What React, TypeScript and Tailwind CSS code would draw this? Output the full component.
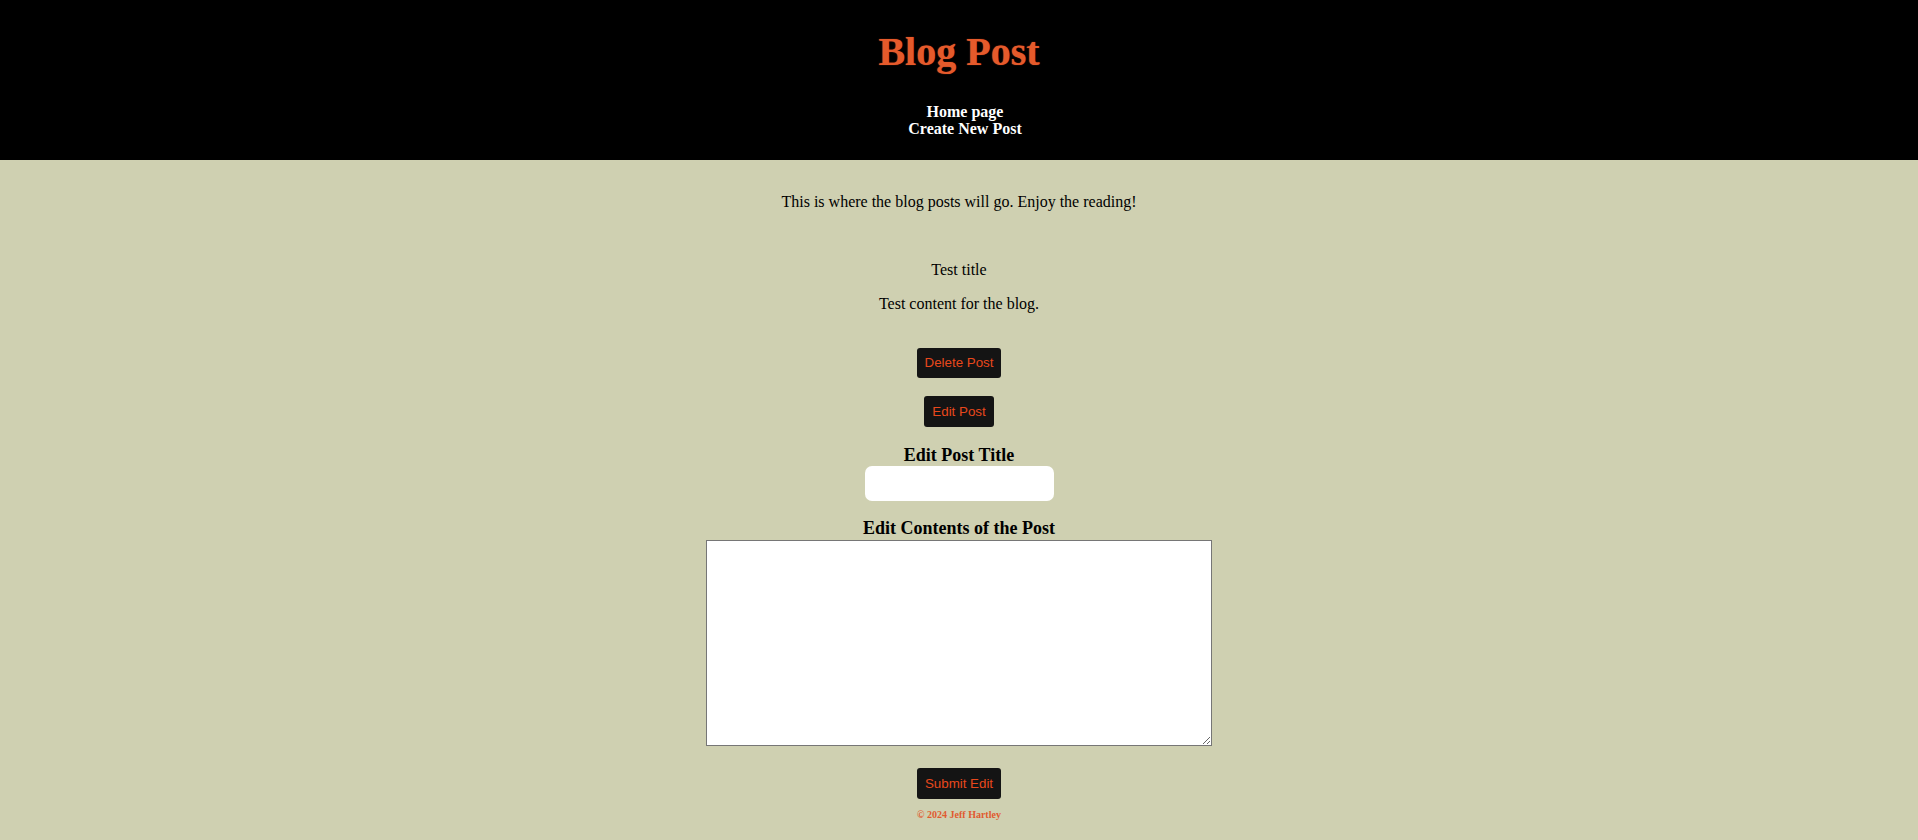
export default function App() {
  return (
    <div className="min-h-screen w-full bg-[#cfd0b1] font-['Liberation_Serif',serif] text-black">
      {/* Header */}
      <header className="flex h-[160px] flex-col items-center bg-black pt-[29px]">
        <h1 className="text-[40px] font-bold leading-[46px] text-[#e55a2b] [text-shadow:0_0_1px_#b8401c]">
          Blog Post
        </h1>
        <nav className="mt-[28px] flex flex-col items-center pl-[12px] text-[16px] font-bold leading-[17px] text-white">
          <a href="#">Home page</a>
          <a href="#">Create New Post</a>
        </nav>
      </header>

      {/* Content */}
      <main className="flex flex-col items-center text-[16px] leading-[18px]">
        <p className="mt-[33px]">This is where the blog posts will go. Enjoy the reading!</p>

        <p className="mt-[50px]">Test title</p>
        <p className="mt-[16px]">Test content for the blog.</p>

        <button className="mt-[35px] rounded-[3px] bg-[#141414] px-2 py-2 font-['Liberation_Sans',Arial,sans-serif] text-[13.33px] leading-[14px] text-[#e8481c]">
          Delete Post
        </button>
        <button className="mt-[18px] rounded-[3px] bg-[#141414] px-2 py-2 font-['Liberation_Sans',Arial,sans-serif] text-[13.33px] leading-[15px] text-[#e8481c]">
          Edit Post
        </button>

        <h3 className="mt-[17px] text-[18px] font-bold leading-[22px]">Edit Post Title</h3>
        <input type="text" className="h-[35px] w-[189px] rounded-[7px] bg-white px-2 outline-none" />

        <h3 className="mt-[16px] text-[18px] font-bold leading-[22px]">Edit Contents of the Post</h3>
        <textarea className="mt-[1px] h-[206px] w-[506px] border border-[#767676] bg-white p-[2px] font-mono text-[13px] outline-none" />

        <button className="mt-[22px] rounded-[3px] bg-[#141414] px-2 py-2 font-['Liberation_Sans',Arial,sans-serif] text-[13.33px] leading-[15px] text-[#e8481c]">
          Submit Edit
        </button>

        <footer className="mt-[10px] text-[10px] font-bold leading-[12px] text-[#e05a30]">
          © 2024 Jeff Hartley
        </footer>
      </main>
    </div>
  );
}
